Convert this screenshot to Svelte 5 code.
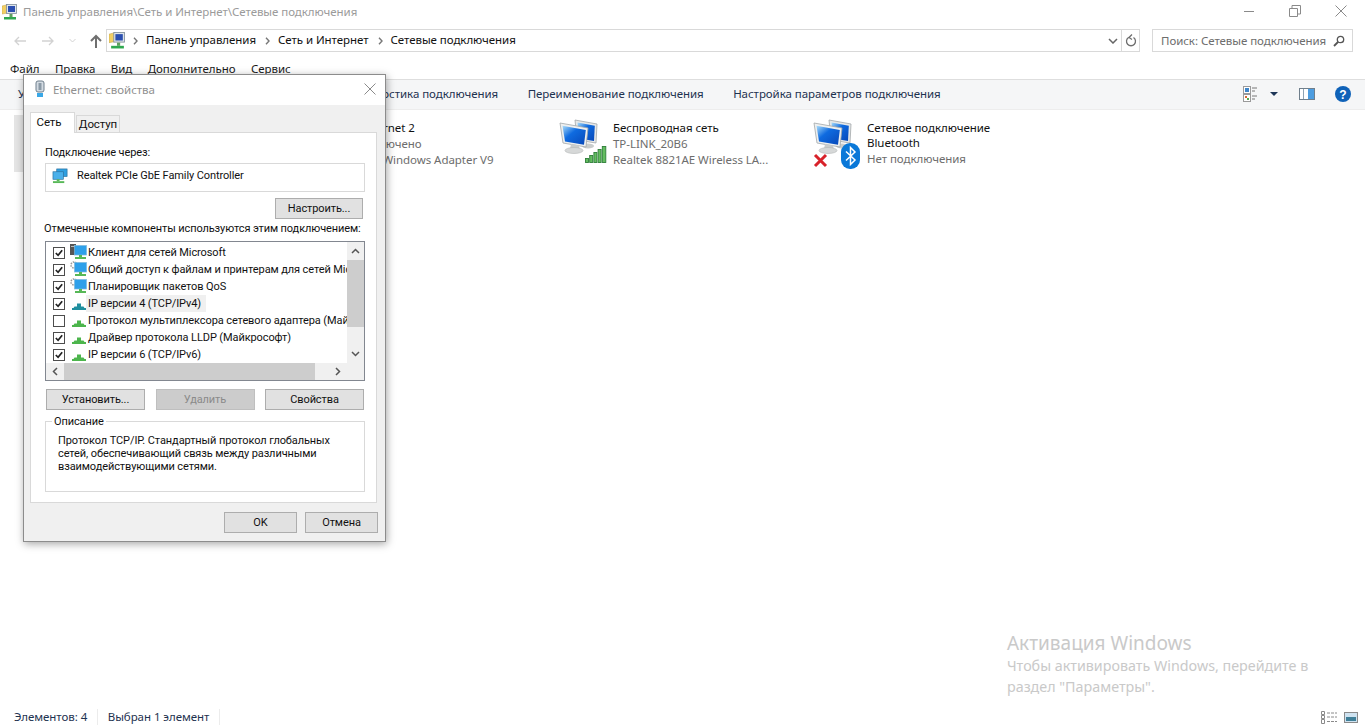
<script>
  const rows = [
    { on: true, icon: 'client', text: 'Клиент для сетей Microsoft' },
    { on: true, icon: 'service', text: 'Общий доступ к файлам и принтерам для сетей Microsoft' },
    { on: true, icon: 'service', text: 'Планировщик пакетов QoS' },
    { on: true, icon: 'protoTeal', text: 'IP версии 4 (TCP/IPv4)', hi: true },
    { on: false, icon: 'proto', text: 'Протокол мультиплексора сетевого адаптера (Майкрософт)' },
    { on: true, icon: 'proto', text: 'Драйвер протокола LLDP (Майкрософт)' },
    { on: true, icon: 'proto', text: 'IP версии 6 (TCP/IPv6)' }
  ];
</script>

{#snippet pc()}
  <svg class="pc" width="40" height="40" viewBox="0 0 40 40">
    <defs>
      <linearGradient id="scr" x1="0" y1="0" x2="1" y2="1">
        <stop offset="0" stop-color="#a9dcfa" /><stop offset=".4" stop-color="#0f6be0" /><stop offset="1" stop-color="#0848b8" />
      </linearGradient>
    </defs>
    <path d="M16 1 38 5 37 24 18 21Z" fill="#e6e8e8" stroke="#a2a7aa" stroke-width=".8" />
    <path d="M18.500 3.500 35.800 6.800 35 22 20 19.500Z" fill="url(#scr)" />
    <ellipse cx="29" cy="27" rx="6" ry="2.500" fill="#c9cccc" />
    <path d="M1 4 29 9 27 28 4 24Z" fill="#eef0f0" stroke="#a2a7aa" stroke-width=".8" />
    <path d="M3.500 6.800 26.800 11 25 25.800 6 22.500Z" fill="url(#scr)" />
    <path d="M12 25 20 26.500 21 31 11 30Z" fill="#c9cccc" />
    <ellipse cx="15" cy="31.500" rx="9" ry="3" fill="#d6d8d8" stroke="#b2b5b5" stroke-width=".6" />
  </svg>
{/snippet}

{#snippet cp(size)}
  <svg width={size} height={size} viewBox="0 0 16 16">
    <path d="M0 2 6 .5V9L0 10Z" fill="#f2cf63" stroke="#c2a347" stroke-width=".5" />
    <rect x="4.500" y=".5" width="10" height="9" fill="#dfe5ea" stroke="#7f8d99" stroke-width=".8" />
    <rect x="6" y="2" width="7" height="6" fill="#2b4fb0" />
    <rect x="7.500" y="10" width="3" height="3" fill="#5f9e5f" />
    <rect x="2" y="13" width="12" height="2.500" fill="#2fa84f" />
  </svg>
{/snippet}

{#snippet small(kind)}
  <svg class="small" width="17" height="17" viewBox="0 0 17 17">
    {#if kind === 'proto' || kind === 'protoTeal'}
      {@const c = kind === 'proto' ? '#4cb54c' : '#1f8f9f'}
      <path d="M7 8.500H11V11.500H13.500L14.500 13H3.500L4.500 11.500H7Z" fill={c} />
      <rect x="2" y="13" width="14" height="2" fill={c} />
    {:else}
      {#if kind === 'client'}
        <rect x="0" y="0" width="6" height="11" fill="#555" />
        <rect x="1" y="2" width="4" height="1" fill="#bbb" />
      {:else}
        <circle cx="4" cy="4" r="3" fill="none" stroke="#9a9a9a" stroke-width="1.500" stroke-dasharray="1.500 1" />
      {/if}
      <rect x="4.500" y="1.500" width="12" height="9.500" fill="#2ea0ea" stroke="#7cb8dc" stroke-width=".7" />
      <rect x="9" y="11" width="3" height="2" fill="#57b857" />
      <path d="M5 13H16V15H5Z" fill="#57b857" />
    {/if}
  </svg>
{/snippet}

{#snippet chev()}
  <span class="chev"><svg width="5" height="8" viewBox="0 0 5 8"><path d="M1 .8 4 4 1 7.200" fill="none" stroke="#777" stroke-width="1.400" /></svg></span>
{/snippet}

<div class="explorer">
  <header class="titlebar">
    <span class="tb-ic">{@render cp(16)}</span>
    <span class="title">Панель управления\Сеть и Интернет\Сетевые подключения</span>
    <div class="winbtns">
      <span class="wb"><svg width="12" height="12" viewBox="0 0 12 12"><path d="M1 6.500H11" stroke="#8a8a8a" /></svg></span>
      <span class="wb"><svg width="12" height="12" viewBox="0 0 12 12"><path d="M.5 3.500H8.500V11.500H.5ZM3 3.500V.5H11.500V9H8.500" fill="none" stroke="#8a8a8a" /></svg></span>
      <span class="wb"><svg width="12" height="12" viewBox="0 0 12 12"><path d="M.5.5 11.500 11.500M11.500.5 .5 11.500" stroke="#8a8a8a" /></svg></span>
    </div>
  </header>

  <div class="navrow">
    <div class="navbtns">
      <svg width="14" height="12" viewBox="0 0 14 12"><path d="M13 6H2M6 2 2 6l4 4" fill="none" stroke="#d2d2d2" stroke-width="1.300" /></svg>
      <svg width="14" height="12" viewBox="0 0 14 12"><path d="M1 6H12M8 2l4 4-4 4" fill="none" stroke="#d2d2d2" stroke-width="1.300" /></svg>
      <svg width="7" height="5" viewBox="0 0 7 5"><path d="M.5 1 3.500 4 6.500 1" fill="none" stroke="#d2d2d2" /></svg>
      <svg width="12" height="14" viewBox="0 0 12 14"><path d="M6 14V2M1 7l5-5 5 5" fill="none" stroke="#6f6f6f" stroke-width="2" /></svg>
    </div>
    <div class="address">
      <span class="ad-ic">{@render cp(17)}</span>
      {@render chev()}<span class="crumb">Панель управления</span>
      {@render chev()}<span class="crumb">Сеть и Интернет</span>
      {@render chev()}<span class="crumb">Сетевые подключения</span>
      <span class="ad-end">
        <svg width="10" height="6" viewBox="0 0 10 6"><path d="M1 1 5 5 9 1" fill="none" stroke="#666" stroke-width="1.500" /></svg>
      </span>
      <span class="ad-refresh">
        <svg width="12" height="13" viewBox="0 0 12 13"><path d="M8.500 3.500A4.500 4.500 0 1 1 3.500 3.500M7 .5 4 3.500 7 5.500" fill="none" stroke="#6f6f6f" stroke-width="1.300" /></svg>
      </span>
    </div>
    <div class="search">
      <span>Поиск: Сетевые подключения</span>
      <svg width="12" height="12" viewBox="0 0 12 12"><circle cx="7.500" cy="4.500" r="3.200" fill="none" stroke="#555" stroke-width="1.300" /><path d="M5 7 1 11" stroke="#555" stroke-width="1.800" /></svg>
    </div>
  </div>

  <nav class="menu">
    <span>Файл</span><span>Правка</span><span>Вид</span><span>Дополнительно</span><span>Сервис</span>
  </nav>

  <div class="toolbar">
    <div class="tb-lead"><span>Упорядочить</span></div>
    <span class="tb-item">Диагностика подключения</span>
    <span class="tb-item">Переименование подключения</span>
    <span class="tb-item">Настройка параметров подключения</span>
    <div class="tb-right">
      <svg class="i-view" width="15" height="16" viewBox="0 0 15 16">
        <rect x=".5" y=".5" width="7" height="7" fill="#fff" stroke="#9a9a9a" /><rect x="2" y="2" width="4" height="4" fill="#3f86c9" />
        <rect x=".5" y="8.500" width="7" height="7" fill="#fff" stroke="#9a9a9a" /><rect x="2" y="10" width="2" height="2" fill="#d9682f" /><rect x="4" y="12" width="2" height="2" fill="#57a94a" />
        <path d="M9 2H14M9 5H12M9 10H14M9 13H12" stroke="#777" />
      </svg>
      <svg class="i-arrow" width="8" height="4" viewBox="0 0 8 4"><path d="M0 0H8L4 4Z" fill="#1d3557" /></svg>
      <svg class="i-pane" width="16" height="12" viewBox="0 0 16 12"><rect x=".5" y=".5" width="15" height="11" fill="#fff" stroke="#6f7f8c" /><rect x="9" y="1" width="6" height="10" fill="#4d9de0" /><path d="M4.500 1V11" stroke="#8fa3b3" /></svg>
      <svg class="i-help" width="16" height="16" viewBox="0 0 16 16"><circle cx="8" cy="8" r="8" fill="#0f62b8" /><text x="8" y="12.500" text-anchor="middle" class="help-q">?</text></svg>
    </div>
  </div>

  <main class="content">
    <article class="tile selected">
      <div class="tile-ic">{@render pc()}</div>
      <div class="tile-tx"><b>Ethernet</b><i>Сеть</i><i>Realtek PCIe GbE Family</i></div>
    </article>
    <article class="tile">
      <div class="tile-ic">{@render pc()}</div>
      <div class="tile-tx"><b>Ethernet 2</b><i>Отключено</i><i>TAP-Windows Adapter V9</i></div>
    </article>
    <article class="tile">
      <div class="tile-ic">
        {@render pc()}
        <svg class="badge-wifi" width="22" height="17" viewBox="0 0 22 17">
          <g fill="#63bd5f" stroke="#2e7d3a" stroke-width=".9">
            <rect x=".5" y="12.500" width="3" height="4" /><rect x="4.700" y="9.500" width="3" height="7" /><rect x="8.900" y="6.500" width="3" height="10" /><rect x="13.100" y="3.500" width="3" height="13" /><rect x="17.300" y=".5" width="3.500" height="16" />
          </g>
        </svg>
      </div>
      <div class="tile-tx"><b>Беспроводная сеть</b><i>TP-LINK_20B6</i><i>Realtek 8821AE Wireless LA...</i></div>
    </article>
    <article class="tile">
      <div class="tile-ic">
        {@render pc()}
        <svg class="badge-x" width="15" height="15" viewBox="0 0 15 15"><path d="M2 2 13 13M13 2 2 13" stroke="#d8222a" stroke-width="3" /></svg>
        <svg class="badge-bt" width="19" height="26" viewBox="0 0 19 26"><rect width="19" height="26" rx="9" fill="#0a78d8" /><path d="M5 8.500 14 17 9.500 21.500V4.500L14 9 5 17.500" fill="none" stroke="#fff" stroke-width="1.500" /></svg>
      </div>
      <div class="tile-tx bt"><b>Сетевое подключение<br />Bluetooth</b><i>Нет подключения</i></div>
    </article>
  </main>

  <footer class="status">
    <span class="st-a">Элементов: 4</span><span class="st-b">Выбран 1 элемент</span>
    <div class="st-right">
      <svg width="16" height="13" viewBox="0 0 16 13">
        <path d="M.5.5H3.500V3.500H.5ZM.5 4.500H3.500V7.500H.5ZM.5 8.500H3.500V12.500H.5Z" fill="none" stroke="#8a8a8a" />
        <path d="M6 2H16M6 6H16M6 10.500H16" stroke="#8a8a8a" stroke-dasharray="3 1" />
      </svg>
      <svg width="14" height="11" viewBox="0 0 14 11"><rect x=".5" y=".5" width="13" height="10" fill="#cfe3f1" stroke="#8a8a8a" /><rect x="2" y="5" width="10" height="4" fill="#3f7f98" /></svg>
    </div>
  </footer>
</div>

<section class="dialog">
  <div class="dlg-title">
    <svg width="12" height="18" viewBox="0 0 12 18"><rect x="2" y="1" width="8" height="11" rx="2" fill="#d3dbe2" stroke="#6f7f8c" /><rect x="4.500" y="3" width="3" height="7" fill="#8b9aa6" /><path d="M3 13H9V17H3Z" fill="#39a7e6" /></svg>
    <span>Ethernet: свойства</span>
    <svg class="dlg-x" width="12" height="12" viewBox="0 0 12 12"><path d="M.5.5 11.500 11.500M11.500.5 .5 11.500" stroke="#8a8a8a" /></svg>
  </div>
  <div class="dlg-body">
    <div class="tabs">
      <span class="tab active">Сеть</span>
      <span class="tab">Доступ</span>
    </div>
    <div class="pane">
      <div class="lbl lbl-a">Подключение через:</div>
      <div class="adapter">
        <svg width="17" height="16" viewBox="0 0 18 17">
          <rect x="5" y="1" width="11" height="8" fill="#2e9fe0" stroke="#2b6f9c" stroke-width=".7" />
          <rect x="1" y="4" width="11" height="8" fill="#4ab0ea" stroke="#2b6f9c" stroke-width=".7" />
          <rect x="5" y="12" width="3" height="2" fill="#57b857" /><rect x="1" y="14" width="12" height="2" fill="#57b857" />
        </svg>
        <span>Realtek PCIe GbE Family Controller</span>
      </div>
      <div class="cfg-row"><button class="btn cfg">Настроить...</button></div>
      <div class="lbl lbl-b">Отмеченные компоненты используются этим подключением:</div>

      <div class="list">
        <div class="list-top">
          <ul>
            {#each rows as r}
              <li>
                <span class="chk">
                  {#if r.on}<svg width="10" height="10" viewBox="0 0 11 11"><path d="M2 5.500 4.500 8 9 2.500" fill="none" stroke="#222" stroke-width="1.900" /></svg>{/if}
                </span>
                {@render small(r.icon)}
                <span class="rtext" class:hi={r.hi}>{r.text}</span>
              </li>
            {/each}
          </ul>
          <div class="vbar">
            <svg width="9" height="6" viewBox="0 0 9 6"><path d="M1 5 4.500 1.500 8 5" fill="none" stroke="#555" stroke-width="1.500" /></svg>
            <div class="vtrack"><div class="vthumb"></div></div>
            <svg width="9" height="6" viewBox="0 0 9 6"><path d="M1 1 4.500 4.500 8 1" fill="none" stroke="#555" stroke-width="1.500" /></svg>
          </div>
        </div>
        <div class="hbar">
          <svg width="6" height="9" viewBox="0 0 6 9"><path d="M5 1 1.500 4.500 5 8" fill="none" stroke="#555" stroke-width="1.500" /></svg>
          <div class="htrack"><div class="hthumb"></div></div>
          <svg width="6" height="9" viewBox="0 0 6 9"><path d="M1 1 4.500 4.500 1 8" fill="none" stroke="#555" stroke-width="1.500" /></svg>
        </div>
      </div>

      <div class="actions">
        <button class="btn">Установить...</button>
        <button class="btn disabled">Удалить</button>
        <button class="btn">Свойства</button>
      </div>

      <fieldset class="desc">
        <legend>Описание</legend>
        <p>Протокол TCP/IP. Стандартный протокол глобальных<br />сетей, обеспечивающий связь между различными<br />взаимодействующими сетями.</p>
      </fieldset>
    </div>
    <div class="dlg-foot">
      <button class="btn">OK</button>
      <button class="btn">Отмена</button>
    </div>
  </div>
</section>

<aside class="watermark">
  <div class="wm-h">Активация Windows</div>
  <div class="wm-t">Чтобы активировать Windows, перейдите в<br />раздел "Параметры".</div>
</aside>

<style>
  :global(body) { margin: 0; background: #fff; overflow: hidden; }
  .explorer {
    width: 1365px; height: 728px; display: flex; flex-direction: column;
    font-family: "Noto Sans", sans-serif; font-size: 11.500px; letter-spacing: -.05px; color: #1a1a1a; background: #fff; overflow: hidden;
  }
  svg { display: block; flex: none; }
  .titlebar { height: 24px; box-sizing: border-box; display: flex; align-items: center; padding: 0 0 1px 2px; flex: none; }
  .tb-ic { width: 21px; }
  .title { color: #9b9b9b; }
  .winbtns { margin-left: auto; display: flex; padding-right: 1px; align-self: flex-start; }
  .wb { width: 46px; height: 21px; display: flex; align-items: center; justify-content: center; }
  .navrow { height: 23px; margin-top: 5px; display: flex; flex: none; }
  .navbtns { width: 106px; display: flex; align-items: center; padding-left: 13px; box-sizing: border-box; gap: 14px; }
  .address {
    width: 1034px; box-sizing: border-box; border: 1px solid #d9d9d9; display: flex; align-items: center; padding: 0 0 0 2px;
  }
  .ad-ic { width: 24px; }
  .chev { width: 13px; display: block; }
  .crumb { color: #111; margin-right: 9px; line-height: 16px; padding-bottom: 2px; }
  .ad-end { margin-left: auto; width: 17px; display: flex; justify-content: center; }
  .ad-refresh { width: 17px; height: 100%; border-left: 1px solid #d9d9d9; display: flex; align-items: center; justify-content: center; }
  .search {
    width: 201px; margin-left: 12px; box-sizing: border-box; border: 1px solid #d9d9d9; display: flex; align-items: center;
    padding: 0 7px 0 8px; justify-content: space-between; color: #6d6d6d; white-space: nowrap;
  }
  .menu { height: 20px; box-sizing: border-box; margin-top: 7px; display: flex; gap: 15.500px; padding: 0 0 2px 10px; align-items: center; flex: none; }
  .toolbar {
    height: 31px; flex: none; display: flex; align-items: center; background: #f5f6f7; border-top: 1px solid #dedede; border-bottom: 1px solid #ededed;
    box-sizing: border-box; padding: 0 0 2px 18px; color: #1e3250;
  }
  .tb-lead { width: 330.500px; flex: none; }
  .tb-item { margin-right: 29.500px; white-space: nowrap; }
  .tb-right { margin-left: auto; display: flex; align-items: center; padding-right: 14px; }
  .i-arrow { margin-left: 12px; }
  .i-pane { margin-left: 21px; }
  .i-help { margin-left: 20px; }
  .help-q { fill: #fff; font: 700 12px "Liberation Sans", sans-serif; }
  .content { flex: 1; display: grid; grid-template-columns: repeat(4, 254px); align-content: start; padding: 5px 0 0 14px; }
  .tile { height: 57px; display: flex; }
  .tile.selected { background: #e5e5e5; }
  .tile-ic { width: 91px; position: relative; }
  .pc { position: absolute; left: 37px; top: 4px; }
  .badge-wifi { position: absolute; left: 63px; top: 31px; }
  .badge-x { position: absolute; left: 37px; top: 38px; }
  .badge-bt { position: absolute; left: 65px; top: 28px; }
  .tile-tx { display: flex; flex-direction: column; padding-top: 5px; }
  .tile-tx b, .tile-tx i { font-weight: 400; font-style: normal; line-height: 16px; white-space: nowrap; }
  .tile-tx b { color: #111; }
  .tile-tx.bt b { line-height: 15px; }
  .tile-tx.bt i { margin-top: 1px; }
  .tile-tx i { color: #6d6d6d; }
  .status { height: 20px; flex: none; display: flex; align-items: center; padding: 0 0 2px 14px; box-sizing: border-box; color: #1e3250; }
  .st-a { padding-right: 9.500px; border-right: 1px solid #ececec; margin-right: 10px; line-height: 16px; }
  .st-b { padding-right: 10px; border-right: 1px solid #ececec; line-height: 16px; }
  .st-right { margin-left: auto; display: flex; align-items: center; gap: 7px; padding-right: 7px; }

  .dialog {
    position: absolute; left: 23px; top: 74px; width: 363px; height: 468px; box-sizing: border-box;
    border: 1px solid #8c8c8c; box-shadow: 1px 2px 8px rgba(0,0,0,.35); display: flex; flex-direction: column;
    background: #f0f0f0; font-family: "Roboto", sans-serif; font-size: 11px; letter-spacing: -.1px; color: #111;
  }
  .dlg-title {
    height: 30px; flex: none; background: #fff; display: flex; align-items: center; padding: 0 0 2px 10px; gap: 7px; box-sizing: border-box;
    font-family: "Noto Sans", sans-serif; font-size: 11.500px; letter-spacing: -.05px; color: #8f8f8f;
  }
  .dlg-x { margin-left: auto; margin-right: 9px; }
  .dlg-body { flex: 1; display: flex; flex-direction: column; padding: 7px 8px 0 6px; }
  .tabs { display: flex; height: 20px; align-items: flex-end; position: relative; z-index: 1; }
  .tab {
    height: 17px; box-sizing: border-box; border: 1px solid #d9d9d9; border-bottom: 0; background: #f0f0f0; width: 44px; margin-left: 1px;
    display: flex; align-items: center; justify-content: center; font-size: 11.500px;
  }
  .tab.active { width: 45px; margin-left: 0; background: #fff; margin-bottom: -1px; height: 21px; padding: 0 7px 2px 0; }
  .pane {
    width: 347px; height: 371px; box-sizing: border-box; background: #fff; border: 1px solid #d9d9d9; padding: 0 12px 0 14px; flex: none;
  }
  .lbl { height: 16px; line-height: 16px; white-space: nowrap; }
  .lbl-a { margin-top: 12px; }
  .lbl-b { margin-top: 2px; margin-left: -1px; }
  .adapter {
    height: 29px; box-sizing: border-box; border: 1px solid #d9d9d9; margin-top: 2px; display: flex; align-items: center; padding: 0 0 4px 6px; gap: 8px;
    width: 320px;
  }
  .cfg-row { display: flex; justify-content: flex-end; margin-top: 6px; width: 318px; }
  .btn {
    height: 21px; box-sizing: border-box; border: 1px solid #adadad; background: #e1e1e1; font: inherit; letter-spacing: inherit; color: #111; padding: 0; width: 99px;
  }
  .btn.cfg { width: 88px; }
  .btn.disabled { background: #cccccc; border-color: #bfbfbf; color: #8a8a8a; }
  .list {
    width: 320px; height: 140px; box-sizing: border-box; border: 1px solid #828790; margin-top: 4px; display: flex; flex-direction: column; background: #fff;
  }
  .list-top { flex: 1; display: flex; min-height: 0; }
  ul { list-style: none; margin: 0; padding: 2px 0 0; flex: 1; overflow: hidden; min-width: 0; letter-spacing: -.1px; }
  li { height: 17px; display: flex; align-items: center; white-space: nowrap; padding-left: 7px; }
  .chk {
    width: 10px; height: 10px; border: 1px solid #4d4d4d; background: #fff; flex: none; margin-right: 5px; display: block;
  }
  .small { margin-right: 1px; }
  .rtext { padding: 0 5px 0 2px; margin-left: -2px; line-height: 17px; }
  .rtext.hi { background: #f0f0f0; }
  .vbar { width: 17px; background: #f0f0f0; display: flex; flex-direction: column; align-items: center; padding-top: 6px; box-sizing: border-box; }
  .vtrack { flex: 1; width: 100%; padding-top: 6px; margin-bottom: 6px; }
  .vthumb { height: 67px; background: #cdcdcd; }
  .vbar svg:last-child { margin-bottom: 6px; }
  .hbar { height: 17px; flex: none; background: #f0f0f0; display: flex; align-items: center; padding: 0 23px 0 6px; }
  .htrack { flex: 1; height: 100%; display: flex; }
  .hthumb { margin-left: 6px; width: 251px; background: #cdcdcd; }
  .actions { display: flex; margin-top: 8px; margin-left: 1px; width: 318px; justify-content: space-between; }
  .desc {
    width: 320px; height: 77px; box-sizing: border-box; border: 1px solid #d9d9d9; margin: 5px 0 0; padding: 0 0 0 12px; min-width: 0;
  }
  legend { padding: 0 2px; margin-left: -6px; line-height: 13px; }
  .desc p { margin: 6px 0 0; line-height: 13px; white-space: nowrap; }
  .dlg-foot { display: flex; justify-content: flex-end; gap: 8px; margin-top: 9px; margin-right: -1px; }
  .dlg-foot .btn { width: 73px; }
  .watermark { position: absolute; left: 1007px; top: 630px; font-family: "Noto Sans", sans-serif; color: #c9c9c9; }
  .wm-h { font-size: 19px; line-height: 26px; }
  .wm-t { font-size: 14.300px; line-height: 21px; margin-top: -1px; }
</style>
